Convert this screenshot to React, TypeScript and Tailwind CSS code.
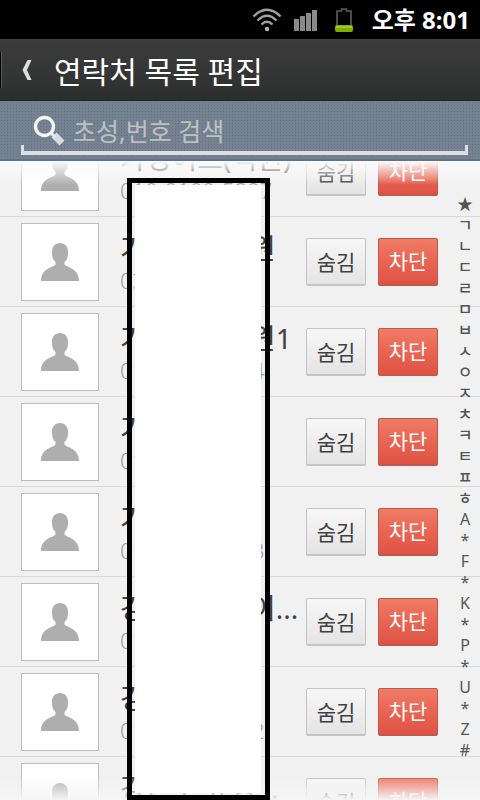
import { useState } from "react";

// start is the head of the name or number, end is its tail on the far side of the mask
const contacts = [
  { start: "가영어드(직원)", end: "", phoneStart: "010-9109-5297", phoneEnd: "" },
  { start: "가", end: "원", phoneStart: "031", phoneEnd: "" },
  { start: "가", end: "원1", phoneStart: "01", phoneEnd: "4" },
  { start: "가", end: "", phoneStart: "01", phoneEnd: "" },
  { start: "가", end: "", phoneStart: "01", phoneEnd: "3" },
  { start: "강", end: "이...", phoneStart: "01", phoneEnd: "" },
  { start: "강", end: "", phoneStart: "01", phoneEnd: "2" },
  { start: "강은모 유영...", end: "", phoneStart: "01", phoneEnd: "" },
];

const indexLetters = [..."★ㄱㄴㄷㄹㅁㅂㅅㅇㅈㅊㅋㅌㅍㅎA*F*K*P*U*Z#"];

function StatusBar() {
  return (
    <div className="flex h-[39px] shrink-0 items-center justify-end bg-black pr-2.5 text-white">
      <svg width="30" height="26" viewBox="0 0 30 26" fill="none" stroke="#a0a0a0" strokeWidth="2.4">
        <path d="M1.5 9.5Q15 -4 28.500 9.500" />
        <path d="M5.500 13.500Q15 4 24.500 13.500" />
        <path d="M9.500 17.500Q15 12 20.500 17.500" />
        <circle cx="15" cy="22" r="2.200" fill="#b4b4b4" stroke="none" />
      </svg>
      <svg className="ml-3" width="24" height="22" viewBox="0 0 24 22" fill="#8a8a8a">
        <rect x="0" y="10" width="5" height="12" />
        <rect x="6" y="7" width="5" height="15" />
        <rect x="12" y="4" width="5" height="18" />
        <rect x="18" y="1" width="5" height="21" />
      </svg>
      <svg className="ml-4" width="20" height="26" viewBox="0 0 20 26" fill="none">
        <path d="M3 19V4h4.500V2h5v2H17v15" stroke="#5c5c5c" strokeWidth="1.600" />
        <rect x="1" y="18" width="18" height="7" rx="2" fill="#7fae00" />
        <rect x="2" y="19" width="16" height="2" fill="#a0cc2a" />
      </svg>
      <span className="ml-4.5 text-2xl leading-9 font-bold">오후 8:01</span>
    </div>
  );
}

function TitleBar() {
  return (
    <header className="flex h-[62px] shrink-0 items-center border-b border-[#1f2628] bg-linear-to-b from-[#3d3b3b] via-[#343736] to-[#2c2e2d]">
      <span className="h-9 w-0.5 border-r border-[#5e5e5e] bg-black"></span>
      <button aria-label="뒤로" className="flex h-full w-[52px] items-center pl-5">
        <svg width="10" height="22" viewBox="0 0 10 22" fill="#dcdcdc">
          <path d="M5.500 1H9.500L5 11L9.500 21H5.500L0.500 11Z" />
        </svg>
      </button>
      <h1 className="pt-1 text-[30px] leading-10 text-white">연락처 목록 편집</h1>
    </header>
  );
}

function SearchBar() {
  const [query, setQuery] = useState("");

  return (
    <div className="h-15 shrink-0 border-b-2 border-[#657282] bg-[#748291] bg-[radial-gradient(#64717f_1px,transparent_1px)] bg-size-[3px_3px] pr-3 pl-[21px]">
      <label className="relative flex h-[54px] items-center pt-1.5 pl-3">
        <svg width="32" height="32" viewBox="0 0 32 32" fill="none">
          <path d="M21 20L29 28" stroke="#d8dadc" strokeWidth="7" />
          <path d="M17 17L22 22" stroke="#e8e8e8" strokeWidth="3" />
          <circle cx="11.500" cy="11.500" r="9" stroke="#f4f5f6" strokeWidth="3.400" />
        </svg>
        <input
          type="text"
          aria-label="초성,번호 검색"
          placeholder="초성,번호 검색"
          value={query}
          onChange={(e) => setQuery(e.target.value)}
          className="ml-2 h-10 min-w-0 flex-1 bg-transparent text-[25px] text-white outline-none placeholder:text-[#bfc0c1]"
        />
        <span className="absolute inset-x-0 bottom-0 h-2.5 border-x-3 border-b-4 border-[#dcdfe3]"></span>
      </label>
    </div>
  );
}

function Avatar() {
  return (
    <div className="flex size-[78px] shrink-0 items-center justify-center border border-[#bdbdbd] bg-white">
      <svg width="38" height="38" viewBox="0 0 38 38" fill="#aeaeae">
        <path d="M19 0C24 0 27.500 4 27 10C27 14 26 17 23.500 19V21.500C25 24.500 38 25 38 38H0C0 25 13 24.500 14.500 21.500V19C12 17 11 14 11 10C10.500 4 14 0 19 0Z" />
      </svg>
    </div>
  );
}

function ContactRow({ contact }: { contact: (typeof contacts)[number] }) {
  return (
    <li className="flex h-[90px] items-center border-b border-[#d8d8d8] pr-[42px] pl-[21px]">
      <Avatar />
      <div className="ml-[21px] min-w-0 flex-1 whitespace-nowrap">
        <div className="flex text-[28px] leading-9 text-[#404040]">
          <span className="min-w-[130px]">{contact.start}</span>
          <span>{contact.end}</span>
        </div>
        <div className="flex text-[22px] leading-7 font-light text-[#9c9c9c]">
          <span className="min-w-[132px]">{contact.phoneStart}</span>
          <span>{contact.phoneEnd}</span>
        </div>
      </div>
      <button className="h-12 w-15 shrink-0 rounded-xs border border-b-2 border-[#c4c4c4] bg-linear-to-b from-[#f7f7f7] to-[#e4e4e4] pt-1 text-[21px] text-[#404040]">
        숨김
      </button>
      <button className="ml-3 h-12 w-15 shrink-0 rounded-xs border border-b-2 border-[#c2574c] bg-linear-to-b from-[#f07c66] via-[#e86552] to-[#df5345] pt-0.5 text-[21px] text-white">
        차단
      </button>
    </li>
  );
}

export default function App() {
  return (
    <div className="relative flex h-screen flex-col overflow-hidden bg-[#f1f1f1] font-['Noto_Sans','Noto_Sans_CJK_KR',sans-serif]">
      <StatusBar />
      <TitleBar />
      <SearchBar />

      <main className="relative min-h-0 flex-1 overflow-hidden">
        {/* The list is scrolled part way into its first row */}
        <ul className="-mt-[34px]">
          {contacts.map((contact, index) => (
            <ContactRow key={index} contact={contact} />
          ))}
        </ul>

        {/* Fading edges */}
        <div className="pointer-events-none absolute inset-x-0 top-0 h-6 bg-linear-to-b from-[#fafafa] to-transparent"></div>
        <div className="pointer-events-none absolute inset-x-0 bottom-0 h-6 bg-linear-to-t from-[#f5f5f5] to-transparent"></div>

        {/* Letter index */}
        <nav className="absolute top-[33px] right-0 flex w-[30px] flex-col text-center text-base leading-[21px] font-medium text-[#555555]">
          {indexLetters.map((letter, index) => (
            <a key={index} href="#" className={/[A-Z*#]/.test(letter) ? "h-[21px] font-normal" : "h-[21px]"}>
              {letter}
            </a>
          ))}
        </nav>

        {/* Privacy mask over names and numbers */}
        <div className="absolute top-[17px] bottom-0 left-[127px] w-[143px] border-5 border-black pt-0.5 pr-1 pb-0.5 pl-[3px]">
          <div className="h-full bg-white"></div>
        </div>
      </main>
    </div>
  );
}
